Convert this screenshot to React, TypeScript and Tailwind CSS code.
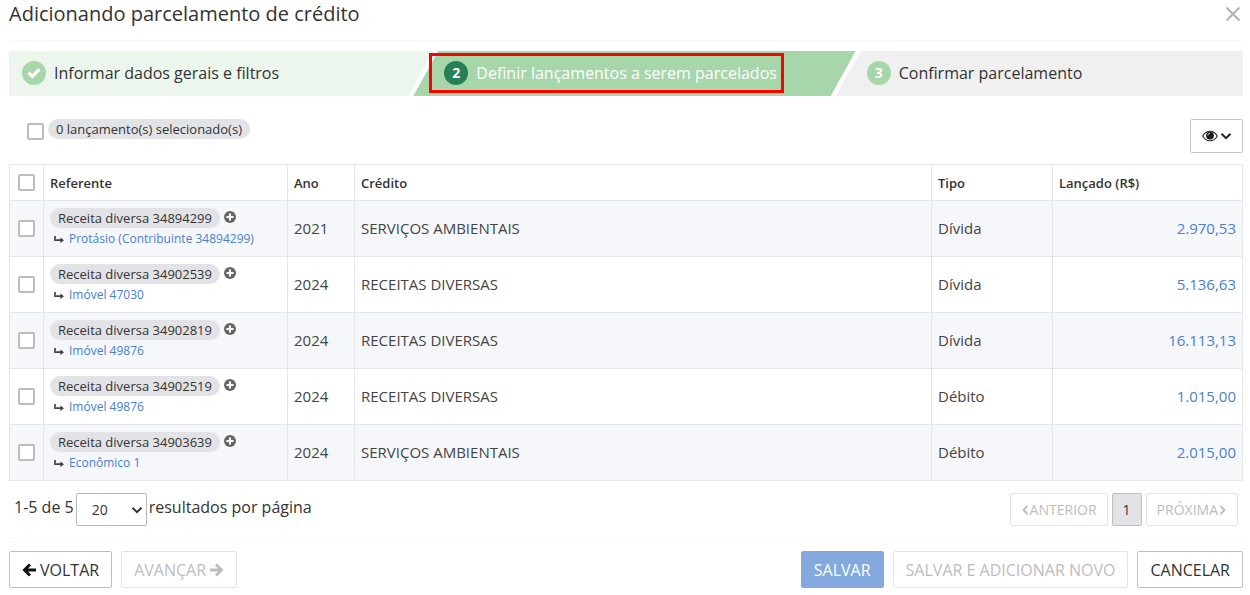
import { useState } from 'react';
import type { ReactNode } from 'react';
import clsx from 'clsx';

// ---------------------------------------------------------------------------
// Data
// ---------------------------------------------------------------------------
interface Lancamento {
  id: string;
  vinculo: string;
  ano: number;
  credito: string;
  tipo: string;
  valor: string;
}

const LANCAMENTOS: Lancamento[] = [
  { id: '34894299', vinculo: 'Protásio (Contribuinte 34894299)', ano: 2021, credito: 'SERVIÇOS AMBIENTAIS', tipo: 'Dívida', valor: '2.970,53' },
  { id: '34902539', vinculo: 'Imóvel 47030', ano: 2024, credito: 'RECEITAS DIVERSAS', tipo: 'Dívida', valor: '5.136,63' },
  { id: '34902819', vinculo: 'Imóvel 49876', ano: 2024, credito: 'RECEITAS DIVERSAS', tipo: 'Dívida', valor: '16.113,13' },
  { id: '34902519', vinculo: 'Imóvel 49876', ano: 2024, credito: 'RECEITAS DIVERSAS', tipo: 'Débito', valor: '1.015,00' },
  { id: '34903639', vinculo: 'Econômico 1', ano: 2024, credito: 'SERVIÇOS AMBIENTAIS', tipo: 'Débito', valor: '2.015,00' },
];

// ---------------------------------------------------------------------------
// Icons
// ---------------------------------------------------------------------------
function ChevronDown({ className }: { className?: string }) {
  return (
    <svg viewBox="0 0 12 12" className={clsx('size-3', className)} fill="none" stroke="currentColor" strokeWidth="2" aria-hidden="true">
      <path d="M1.500 3.800L6 8.200l4.500-4.400" />
    </svg>
  );
}

function ChevronSide({ d }: { d: string }) {
  return (
    <svg viewBox="0 0 8 12" className="h-3 w-2" fill="none" stroke="currentColor" strokeWidth="1.800" aria-hidden="true">
      <path d={d} />
    </svg>
  );
}

function EyeIcon() {
  return (
    <svg viewBox="0 0 16 12" className="h-3 w-4" aria-hidden="true">
      <path d="M.7 6C2.500 2.800 5 1.200 8 1.200S13.500 2.800 15.300 6C13.500 9.200 11 10.800 8 10.800S2.500 9.200.7 6z" fill="#fff" stroke="#222" strokeWidth="1.100" />
      <circle cx="8" cy="5.600" r="3.900" fill="#1b1b1b" />
      <path d="M5.800 5.400A2.300 2.300 0 0 1 8 3.200" fill="none" stroke="#fff" strokeWidth=".8" />
    </svg>
  );
}

function BranchIcon() {
  return (
    <svg viewBox="0 0 10 8" className="h-2 w-[10px] text-[#444]" aria-hidden="true">
      <path d="M1 1v4.200h6" fill="none" stroke="currentColor" strokeWidth="1.700" />
      <path d="M6.300 2.400L10 5.200 6.300 8z" fill="currentColor" />
    </svg>
  );
}

function CheckIcon() {
  return (
    <svg viewBox="0 0 14 12" className="h-3 w-[14px]" fill="none" stroke="currentColor" strokeWidth="3.400" aria-hidden="true">
      <path d="M1.500 5.600L5.300 9.400 12.400 2.300" />
    </svg>
  );
}

function PlusIcon() {
  return (
    <svg viewBox="0 0 12 12" className="size-3" aria-hidden="true">
      <circle cx="6" cy="6" r="6" fill="currentColor" />
      <path d="M6 2.500v7M2.500 6h7" stroke="#fff" strokeWidth="2" />
    </svg>
  );
}

function ArrowIcon({ d }: { d: string }) {
  return (
    <svg viewBox="0 0 14 14" className="size-[14px]" fill="none" stroke="currentColor" strokeWidth="3" aria-hidden="true">
      <path d={d} />
    </svg>
  );
}

// ---------------------------------------------------------------------------
// Building blocks
// ---------------------------------------------------------------------------
interface CheckProps {
  label: string;
  checked: boolean;
  onChange: () => void;
}

function Check({ label, checked, onChange }: CheckProps) {
  return (
    <input
      type="checkbox"
      aria-label={label}
      checked={checked}
      onChange={onChange}
      className="block size-[17px] shrink-0 appearance-none rounded-xs border-2 border-[#bdbdbd] bg-white checked:bg-[#5086d4]"
    />
  );
}

interface StepProps {
  badge: ReactNode;
  label: string;
  className: string;
  shape: string;
  badgeClass: string;
  contentClass: string;
}

function Step({ badge, label, className, shape, badgeClass, contentClass }: StepProps) {
  return (
    <li className={clsx('relative flex h-[45px] items-start pt-[2px]', className)}>
      <span className={clsx('absolute inset-0', shape)} />
      <span className={clsx('relative flex h-10 items-center gap-2 whitespace-nowrap text-base', contentClass)}>
        <span className={clsx('flex size-6 items-center justify-center rounded-full text-sm font-bold text-white', badgeClass)}>
          {badge}
        </span>
        {label}
      </span>
    </li>
  );
}

const BTN = 'flex h-[37px] items-center rounded-xs border px-3 text-base';
const PAGE_BTN = 'flex h-[33px] items-center gap-px rounded-xs border px-[10px] text-sm';
const CELL = 'border border-[#e4e7ea] px-[6px]';

// ---------------------------------------------------------------------------
// Component
// ---------------------------------------------------------------------------
export default function App() {
  const [selected, setSelected] = useState<string[]>([]);
  const allSelected = selected.length === LANCAMENTOS.length;

  const toggle = (id: string) =>
    setSelected((prev) => (prev.includes(id) ? prev.filter((s) => s !== id) : [...prev, id]));
  const toggleAll = () => setSelected(allSelected ? [] : LANCAMENTOS.map((l) => l.id));

  return (
    <main className="bg-white pr-[7px] pl-[9px] font-['Open_Sans',sans-serif] text-[#333]">
      {/* Title */}
      <header className="flex h-[41px] items-start justify-between border-b border-[#f7f7f7]">
        <h1 className="text-xl leading-7">Adicionando parcelamento de crédito</h1>
        <button type="button" aria-label="Fechar" className="pt-[6px] pr-[2px] text-[#b5b5b5]">
          <svg viewBox="0 0 16 16" className="size-4" fill="none" stroke="currentColor" strokeWidth="2.200">
            <path d="M1.500 1.500l13 13M14.500 1.500l-13 13" />
          </svg>
        </button>
      </header>

      {/* Steps */}
      <ol className="mt-[10px] flex">
        <Step
          badge={<CheckIcon />}
          label="Informar dados gerais e filtros"
          className="flex-[424_1_0%]"
          shape="bg-[#ecf6ed] [clip-path:polygon(0_0,100%_0,calc(100%-25px)_100%,0_100%)]"
          badgeClass="bg-[#a6d6aa]"
          contentClass="ml-[13px]"
        />
        <Step
          badge="2"
          label="Definir lançamentos a serem parcelados"
          className="-ml-5 flex-[442_1_0%]"
          shape="bg-[#a6d6aa] [clip-path:polygon(25px_0,100%_0,calc(100%-25px)_100%,0_100%)]"
          badgeClass="bg-[#277f55]"
          contentClass="ml-4 border-3 border-[#fe0000] pr-1 pl-3 text-white"
        />
        <Step
          badge="3"
          label="Confirmar parcelamento"
          className="-ml-5 flex-[407_1_0%]"
          shape="bg-[#f0f0f0] [clip-path:polygon(25px_0,100%_0,100%_100%,0_100%)]"
          badgeClass="bg-[#a6d6aa]"
          contentClass="ml-[31px]"
        />
      </ol>

      {/* Selection summary */}
      <div className="mt-[23px] flex items-start justify-between">
        <div className="flex items-start gap-1 pl-[18px]">
          <div className="pt-1">
            <Check label="Selecionar todos os lançamentos" checked={allSelected} onChange={toggleAll} />
          </div>
          <span className="rounded-full bg-[#e2e3e7] px-2 text-[13px] leading-5">{selected.length} lançamento(s) selecionado(s)</span>
        </div>
        <button type="button" aria-label="Colunas visíveis" className="flex h-[34px] w-[53px] items-center justify-center gap-[2px] rounded-xs border border-[#c6c6c6] text-[#222]">
          <EyeIcon />
          <ChevronDown />
        </button>
      </div>

      {/* Table */}
      <table className="mt-[11px] w-full table-fixed border-collapse text-left">
        <colgroup>
          <col className="w-[34px]" />
          <col className="w-[244px]" />
          <col className="w-[67px]" />
          <col />
          <col className="w-[121px]" />
          <col className="w-[190px]" />
        </colgroup>
        <thead>
          <tr className="h-9 text-[13px]">
            <th className={clsx(CELL, 'pl-2')}>
              <Check label="Selecionar página" checked={allSelected} onChange={toggleAll} />
            </th>
            {['Referente', 'Ano', 'Crédito', 'Tipo', 'Lançado (R$)'].map((h) => (
              <th key={h} scope="col" className={clsx(CELL, 'pt-[2px] font-semibold')}>{h}</th>
            ))}
          </tr>
        </thead>
        <tbody>
          {LANCAMENTOS.map((l) => (
            <tr key={l.id} className="h-14 text-[15px] text-[#444] odd:bg-[#f5f7fb]">
              <td className={clsx(CELL, 'pl-2')}>
                <Check label={`Selecionar ${l.id}`} checked={selected.includes(l.id)} onChange={() => toggle(l.id)} />
              </td>
              <td className={CELL}>
                <div className="flex items-start gap-1">
                  <span className="rounded-full bg-[#e2e3e7] px-2 text-[13px] leading-5 text-[#333]">Receita diversa {l.id}</span>
                  <button type="button" aria-label={`Detalhar ${l.id}`} className="pt-[3px] text-[#666]">
                    <PlusIcon />
                  </button>
                </div>
                <div className="mt-px flex items-center gap-[5px] pl-1 text-xs leading-5">
                  <BranchIcon />
                  <a href="#" className="text-[#4a80d0]">{l.vinculo}</a>
                </div>
              </td>
              <td className={CELL}>{l.ano}</td>
              <td className={CELL}>{l.credito}</td>
              <td className={CELL}>{l.tipo}</td>
              <td className={clsx(CELL, 'text-right')}>
                <a href="#" className="text-[#4a80d0]">{l.valor}</a>
              </td>
            </tr>
          ))}
        </tbody>
      </table>

      {/* Pagination */}
      <div className="flex h-[58px] items-start justify-between border-b border-[#f7f7f7] pt-3 pr-[5px] pl-[5px]">
        <label className="flex items-start gap-[2px] text-base leading-7">
          1-5 de 5
          <span className="relative">
            <select defaultValue="20" className="block h-[33px] w-[71px] appearance-none rounded-xs border border-[#b9b9b9] bg-white pl-[15px] text-sm">
              <option>10</option>
              <option>20</option>
              <option>50</option>
            </select>
            <ChevronDown className="pointer-events-none absolute top-[11px] right-1" />
          </span>
          resultados por página
        </label>
        <nav className="flex gap-1">
          <button type="button" disabled className={clsx(PAGE_BTN, 'border-[#e4e4e4] text-[#bdbdbd]')}>
            <ChevronSide d="M6.500 2L2.500 6l4 4" />
            ANTERIOR
          </button>
          <button type="button" className={clsx(PAGE_BTN, 'border-[#bfbfc3] bg-[#e2e3e7]')}>1</button>
          <button type="button" disabled className={clsx(PAGE_BTN, 'border-[#e4e4e4] text-[#bdbdbd]')}>
            PRÓXIMA
            <ChevronSide d="M1.500 2l4 4-4 4" />
          </button>
        </nav>
      </div>

      {/* Actions */}
      <footer className="flex justify-between pt-3">
        <div className="flex gap-[9px]">
          <button type="button" className={clsx(BTN, 'gap-1 border-[#bdbdbd]')}>
            <span className="text-[#111]"><ArrowIcon d="M14 7H3M8 1.500L2.500 7 8 12.500" /></span>
            VOLTAR
          </button>
          <button type="button" disabled className={clsx(BTN, 'gap-1 border-[#e4e4e4] text-[#bdbdbd]')}>
            AVANÇAR
            <ArrowIcon d="M0 7h11M6 1.500L11.500 7 6 12.500" />
          </button>
        </div>
        <div className="flex gap-[9px]">
          <button type="button" className={clsx(BTN, 'border-[#84a9df] bg-[#84a9df] text-white')}>SALVAR</button>
          <button type="button" disabled className={clsx(BTN, 'border-[#e4e4e4] text-[#bdbdbd]')}>SALVAR E ADICIONAR NOVO</button>
          <button type="button" className={clsx(BTN, 'border-[#bdbdbd]')}>CANCELAR</button>
        </div>
      </footer>
    </main>
  );
}
